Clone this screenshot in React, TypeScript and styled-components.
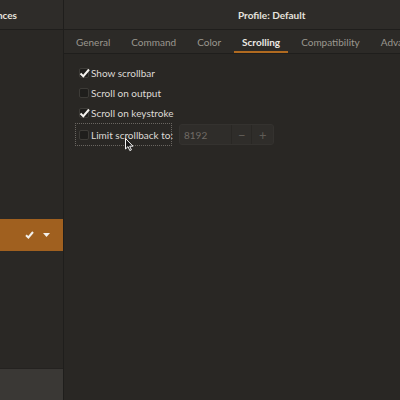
import { createGlobalStyle } from "styled-components";
import styled from "styled-components";

const Global = createGlobalStyle`
  html, body { margin: 0; padding: 0; background: #292724; }
  body { font-family: Lato, "Noto Sans", "DejaVu Sans", sans-serif; }
`;

const Window = styled.div`
  width: 400px;
  height: 400px;
  display: flex;
  overflow: hidden;
  background: #292724;
  color: #dedbd6;
  font-size: 10px;
`;

const Sidebar = styled.aside`
  width: 63px;
  flex: none;
  display: flex;
  flex-direction: column;
  border-right: 1px solid #1f1e1c;
  background: #2a2825;
`;

const SideHeader = styled.div`
  height: 30px;
  flex: none;
  display: flex;
  align-items: center;
  justify-content: flex-end;
  padding-right: 46px;
  overflow: hidden;
  white-space: nowrap;
  background: #2e2c29;
  border-bottom: 1px solid #1f1e1c;
  box-sizing: border-box;
  font-weight: 700;
  color: #e6e3de;
`;

const SideList = styled.div`
  flex: 1;
  padding-top: 189px;
`;

const ProfileRow = styled.div<{ selected?: boolean }>`
  height: 32px;
  display: flex;
  align-items: center;
  justify-content: flex-end;
  gap: 9px;
  padding-right: 13px;
  background: ${({ selected }) => (selected ? "#a0601f" : "transparent")};
`;

const SideFooter = styled.div`
  height: 31px;
  flex: none;
  background: #3a3835;
  border-top: 1px solid #242220;
`;

const Main = styled.main`
  flex: 1;
  display: flex;
  flex-direction: column;
  position: relative;
`;

const HeaderBar = styled.header`
  height: 30px;
  flex: none;
  display: flex;
  align-items: center;
  padding-left: 174px;
  box-sizing: border-box;
  background: #2e2c29;
  border-bottom: 1px solid #1f1e1c;
  font-weight: 700;
  color: #e6e3de;
  white-space: nowrap;
`;

const TabBar = styled.nav`
  height: 24px;
  flex: none;
  display: flex;
  gap: 5px;
  padding-left: 4px;
  box-sizing: border-box;
  background: #2c2a27;
  border-bottom: 1px solid #1f1e1c;
  white-space: nowrap;
  overflow: hidden;
`;

const Tab = styled.div<{ active?: boolean }>`
  display: flex;
  align-items: center;
  padding: 0 8px;
  color: ${({ active }) => (active ? "#ebe8e3" : "#9b978f")};
  font-weight: ${({ active }) => (active ? 700 : 400)};
  box-shadow: ${({ active }) => (active ? "inset 0 -2px 0 #b06a20" : "none")};
`;

const Content = styled.section`
  display: flex;
  flex-direction: column;
  align-items: flex-start;
  padding: 9px 0 0 11px;
`;

const CheckRow = styled.label`
  height: 20px;
  display: flex;
  align-items: center;
  gap: 2px;
  padding-left: 4px;
  white-space: nowrap;
`;

const Box = styled.span`
  width: 8px;
  height: 8px;
  flex: none;
  position: relative;
  border: 1px solid #3d3b37;
  border-radius: 2px;
  background: #1f1e1c;
`;

const CheckMark = styled.svg`
  position: absolute;
  left: -1px;
  top: -1px;
`;

const LimitRow = styled.div`
  display: flex;
  align-items: center;
  gap: 7px;
`;

const FocusRow = styled(CheckRow)`
  height: 23px;
  width: 97px;
  box-sizing: border-box;
  border: 1px dotted #6a6661;
  padding-left: 3px;
`;

const Spin = styled.div`
  width: 95px;
  height: 21px;
  display: flex;
  box-sizing: border-box;
  border: 1px solid #34322f;
  border-radius: 3px;
  background: #2f2d2a;
  color: #6f6b65;
`;

const SpinEntry = styled.div`
  width: 52px;
  display: flex;
  align-items: center;
  padding-left: 4px;
  box-sizing: border-box;
`;

const SpinButton = styled.div<{ wide?: boolean }>`
  width: ${({ wide }) => (wide ? 21 : 20)}px;
  display: flex;
  align-items: center;
  justify-content: center;
  border-left: 1px solid #292724;
  color: #5f5b56;
  font-size: 13px;
`;

const Pointer = styled.svg`
  position: absolute;
  left: 61px;
  top: 138px;
`;

function Tick() {
  return (
    <svg width="9" height="8" viewBox="0 0 9 8">
      <path d="M1 4.2 L3.4 6.5 L8 1" fill="none" stroke="#f2f0ec" strokeWidth="2" />
    </svg>
  );
}

function CheckBox({ checked }: { checked?: boolean }) {
  return (
    <Box>
      {checked && (
        <CheckMark width="11" height="10" viewBox="0 0 11 10">
          <path d="M1.5 5.5 L4.3 8.2 L10 1.5" fill="none" stroke="#f4f2ee" strokeWidth="2" />
        </CheckMark>
      )}
    </Box>
  );
}

export default function App() {
  return (
    <>
      <Global />
      <Window>
        <Sidebar>
          <SideHeader>Preferences</SideHeader>
          <SideList>
            <ProfileRow selected>
              <Tick />
              <svg width="7" height="4" viewBox="0 0 7 4">
                <path d="M0 0 H7 L3.5 4 Z" fill="#f2f0ec" />
              </svg>
            </ProfileRow>
          </SideList>
          <SideFooter />
        </Sidebar>
        <Main>
          <HeaderBar>Profile: Default</HeaderBar>
          <TabBar>
            <Tab>General</Tab>
            <Tab>Command</Tab>
            <Tab>Color</Tab>
            <Tab active>Scrolling</Tab>
            <Tab>Compatibility</Tab>
            <Tab>Advanced</Tab>
          </TabBar>
          <Content>
            <CheckRow>
              <CheckBox checked />
              Show scrollbar
            </CheckRow>
            <CheckRow>
              <CheckBox />
              Scroll on output
            </CheckRow>
            <CheckRow>
              <CheckBox checked />
              Scroll on keystroke
            </CheckRow>
            <LimitRow>
              <FocusRow>
                <CheckBox />
                Limit scrollback to:
              </FocusRow>
              <Spin>
                <SpinEntry>8192</SpinEntry>
                <SpinButton>−</SpinButton>
                <SpinButton wide>+</SpinButton>
              </Spin>
            </LimitRow>
          </Content>
          <Pointer width="9" height="14" viewBox="0 0 9 14">
            <path d="M0.5 0.5 V11 L3 8.6 L4.8 12.6 L6.4 11.9 L4.7 8.2 H8 Z" fill="#1a1a1a" stroke="#f4f4f4" strokeWidth="1" />
          </Pointer>
        </Main>
      </Window>
    </>
  );
}
